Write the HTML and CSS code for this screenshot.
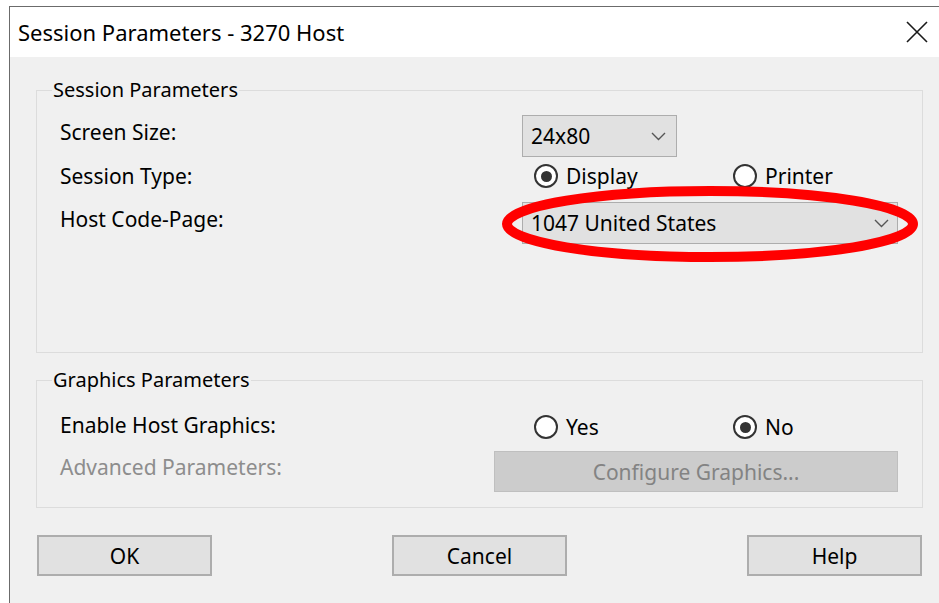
FILE: index.html
```html
<!DOCTYPE html>
<html lang="en">
<head>
<meta charset="utf-8">
<title>Session Parameters - 3270 Host</title>
<link rel="stylesheet" href="styles.css">
</head>
<body>
<div class="window">
  <div class="titlebar">
    <span class="title">Session Parameters - 3270 Host</span>
    <svg class="close" width="22" height="22" viewBox="0 0 22 22" aria-label="Close">
      <path d="M1 1 L21 21 M21 1 L1 21" stroke="#1a1a1a" stroke-width="1.6" fill="none"/>
    </svg>
  </div>

  <div class="content">
    <fieldset class="group group-session">
      <legend>Session Parameters</legend>
      <div class="grid">
        <div class="label">Screen Size:</div>
        <div class="combo combo-small">
          <span>24x80</span>
          <svg class="chev" width="15" height="9" viewBox="0 0 15 9"><path d="M1 1 L7.5 7.5 L14 1" stroke="#555" stroke-width="1.4" fill="none"/></svg>
        </div>

        <div class="label label-mid">Session Type:</div>
        <div class="radios">
          <label class="radio"><span class="dot checked"></span>Display</label>
          <label class="radio"><span class="dot"></span>Printer</label>
        </div>

        <div class="label">Host Code-Page:</div>
        <div class="combo combo-wide">
          <span>1047 United States</span>
          <svg class="chev" width="15" height="9" viewBox="0 0 15 9"><path d="M1 1 L7.5 7.5 L14 1" stroke="#555" stroke-width="1.4" fill="none"/></svg>
        </div>
      </div>
    </fieldset>

    <fieldset class="group group-graphics">
      <legend>Graphics Parameters</legend>
      <div class="grid grid-graphics">
        <div class="label">Enable Host Graphics:</div>
        <div class="radios radios-graphics">
          <label class="radio"><span class="dot"></span>Yes</label>
          <label class="radio"><span class="dot checked"></span>No</label>
        </div>

        <div class="label disabled">Advanced Parameters:</div>
        <div class="btn btn-disabled">Configure Graphics...</div>
      </div>
    </fieldset>

    <div class="actions">
      <div class="btn btn-action">OK</div>
      <div class="btn btn-action">Cancel</div>
      <div class="btn btn-action">Help</div>
    </div>
  </div>
</div>

<!-- hand-drawn highlight around the code page selector -->
<svg class="highlight" width="939" height="603" viewBox="0 0 939 603">
  <ellipse cx="710" cy="224" rx="203" ry="33" fill="none" stroke="#ff0000" stroke-width="10"/>
</svg>
</body>
</html>
```

FILE: styles.css
```css
* {
  box-sizing: border-box;
}

html, body {
  margin: 0;
  padding: 0;
}

body {
  width: 939px;
  height: 603px;
  overflow: hidden;
  background: #ffffff;
  font-family: "Noto Sans", "Liberation Sans", sans-serif;
  font-size: 21px;
  color: #000;
  position: relative;
}

.window {
  margin: 6px 0 0 9px;
  height: 597px;
  border-top: 1px solid #6b6b6b;
  border-left: 1px solid #6b6b6b;
  background: #f0f0f0;
}

.titlebar {
  height: 50px;
  background: #ffffff;
  display: flex;
  align-items: center;
  justify-content: space-between;
  padding: 0 11px 0 8px;
}

.title {
  font-size: 22px;
  line-height: 26px;
  margin-top: -1px;
}

.close {
  display: block;
}

.content {
  padding: 21px 16px 0 26px;
}

.group {
  margin: 0;
  border: 1px solid #dcdcdc;
  padding: 13px 0 0 23px;
  min-width: 0;
}

.group legend {
  padding: 0 1px;
  margin-left: -8px;
  line-height: 24px;
  font-size: 20px;
}

.group-session {
  padding-bottom: 108px;
}

.group-graphics {
  margin-top: 15px;
  padding-top: 16px;
  padding-bottom: 15px;
}

.grid {
  display: grid;
  grid-template-columns: 462px 376px;
  grid-template-rows: 42px 45px 42px;
}

.grid-graphics {
  grid-template-columns: 434px 404px;
  grid-template-rows: 38px 41px;
  row-gap: 5px;
}

.label {
  line-height: 26px;
  padding-top: 4px;
  white-space: nowrap;
}

.label-mid {
  padding-top: 6px;
}

.label.disabled {
  color: #8d8d8d;
  padding-top: 3px;
}

.combo {
  display: flex;
  align-items: center;
  justify-content: space-between;
  height: 42px;
  background: #e1e1e1;
  border: 1px solid #adadad;
  padding: 0 10px 0 8px;
}

.combo-small {
  width: 155px;
}

.combo-wide {
  width: 376px;
  padding-right: 8px;
}

.chev {
  display: block;
}

.radios {
  display: grid;
  grid-template-columns: 199px auto;
  align-items: center;
  align-self: start;
  height: 38px;
  padding-left: 12px;
}

.radios-graphics {
  padding-left: 40px;
}

.radio {
  display: flex;
  align-items: center;
  gap: 8px;
  line-height: 26px;
}

.dot {
  width: 24px;
  height: 24px;
  border-radius: 50%;
  border: 2px solid #333333;
  background: #ffffff;
  display: flex;
  align-items: center;
  justify-content: center;
  flex: none;
}

.dot.checked::after {
  content: "";
  width: 11px;
  height: 11px;
  border-radius: 50%;
  background: #333333;
}

.btn {
  display: flex;
  align-items: center;
  justify-content: center;
  height: 41px;
  background: #e1e1e1;
  border: 2px solid #adadad;
  line-height: 26px;
}

.btn-disabled {
  width: 404px;
  background: #cccccc;
  border: 1px solid #bfbfbf;
  color: #838383;
}

.actions {
  display: flex;
  justify-content: space-between;
  margin-top: 27px;
  width: 885px;
  margin-left: 1px;
}

.btn-action {
  width: 175px;
}

.highlight {
  position: absolute;
  left: 0;
  top: 0;
  pointer-events: none;
}
```
